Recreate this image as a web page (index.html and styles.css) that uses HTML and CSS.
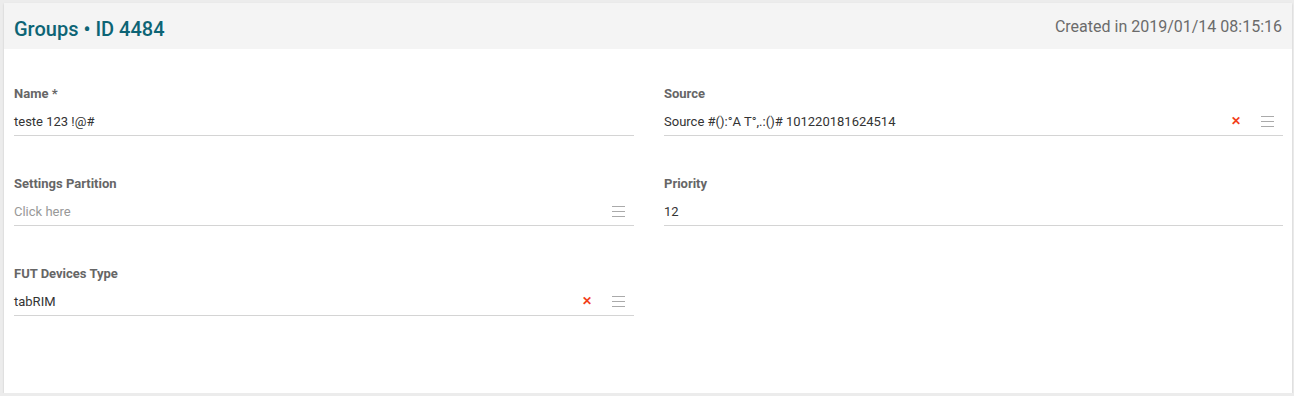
FILE: index.html
```html
<!DOCTYPE html>
<html lang="en">
<head>
  <meta charset="UTF-8">
  <title>Groups</title>
  <link rel="stylesheet" href="styles.css">
</head>
<body>

<div class="card">
  <!-- Header -->
  <div class="card-header">
    <h1>Groups &bull; ID 4484</h1>
    <span class="created">Created in 2019/01/14 08:15:16</span>
  </div>

  <!-- Form -->
  <div class="card-body">
    <div class="field">
      <label>Name *</label>
      <div class="input-row"><span class="value">teste 123 !@#</span></div>
    </div>

    <div class="field">
      <label>Source</label>
      <div class="input-row">
        <span class="value">Source #():°A T°,.:()# 101220181624514</span>
        <span class="clear">&#x2715;</span>
        <span class="menu"><i></i><i></i><i></i></span>
      </div>
    </div>

    <div class="field">
      <label>Settings Partition</label>
      <div class="input-row">
        <span class="value placeholder">Click here</span>
        <span class="menu"><i></i><i></i><i></i></span>
      </div>
    </div>

    <div class="field">
      <label>Priority</label>
      <div class="input-row"><span class="value">12</span></div>
    </div>

    <div class="field">
      <label>FUT Devices Type</label>
      <div class="input-row">
        <span class="value">tabRIM</span>
        <span class="clear">&#x2715;</span>
        <span class="menu"><i></i><i></i><i></i></span>
      </div>
    </div>
  </div>
</div>

</body>
</html>
```

FILE: styles.css
```css
body {
  margin: 0;
  padding: 3px 2px 0 4px;
  background-color: #ececec;
  font-family: Roboto, "Liberation Sans", Arial, sans-serif;
}

.card {
  height: 390px;
  background-color: #fff;
  box-shadow: 0 1px 2px rgba(0, 0, 0, 0.15);
}

.card-header {
  display: flex;
  justify-content: space-between;
  align-items: center;
  height: 46px;
  padding: 0 10px;
  background-color: #f4f4f4;
}

.card-header h1 {
  margin: 6px 0 0 0;
  font-size: 20px;
  font-weight: 500;
  color: #0d6475;
}

.created {
  font-size: 16px;
  color: #6b6b6b;
}

.card-body {
  display: grid;
  grid-template-columns: 620px 1fr;
  column-gap: 30px;
  row-gap: 40px;
  padding: 37px 9px 0 10px;
}

.field label {
  display: block;
  height: 15px;
  line-height: 15px;
  font-size: 13px;
  font-weight: bold;
  color: #666;
  margin-bottom: 6px;
}

.input-row {
  display: flex;
  align-items: center;
  height: 28px;
  border-bottom: 1px solid #d4d4d4;
  font-size: 13px;
  color: #333;
}

.value {
  flex: 1;
}

.placeholder {
  color: #999;
}

.clear {
  width: 12px;
  margin-right: 19px;
  font-size: 12px;
  font-weight: bold;
  color: #f2401a;
  text-align: center;
}

/* hamburger */
.menu {
  display: flex;
  flex-direction: column;
  gap: 4px;
  width: 13px;
  margin-right: 9px;
}

.menu i {
  display: block;
  height: 1px;
  background-color: #aaa;
}
```
